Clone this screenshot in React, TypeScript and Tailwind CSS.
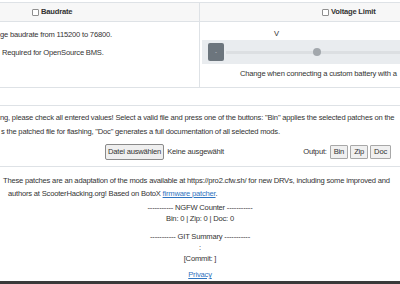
import React from 'react';

const font = { fontFamily: '"Liberation Sans", Arial, sans-serif' };

const Check: React.FC = () => (
  <span className="inline-block w-[7px] h-[7px] border border-[#8f8f8f] rounded-[1px] bg-white mr-[2px]" />
);

const OutBtn: React.FC<{ label: string }> = ({ label }) => (
  <button className="h-[14px] px-[3px] border border-[#a8a8a8] bg-[#f0f0f0] rounded-[1px] leading-[12px]">{label}</button>
);

export default function App() {
  return (
    <div className="w-[400px] h-[284px] overflow-hidden bg-white text-[#333] text-[7.6px] tracking-[-0.2px] flex flex-col" style={font}>
      {/* mod table */}
      <div className="mt-[2px] border-t border-b border-[#dee2e6] grid grid-cols-[199px_201px]">
        <div className="h-[19px] bg-[#f7f7f7] border-b border-[#dee2e6] flex items-center pl-[32px] font-bold">
          <Check />
          <span>Baudrate</span>
        </div>
        <div className="h-[19px] bg-[#f7f7f7] border-b border-l border-[#dee2e6] flex items-center pl-[122px] font-bold">
          <Check />
          <span>Voltage Limit</span>
        </div>
        <div className="h-[65px] pt-[8px] leading-[10px] whitespace-nowrap">
          <div>ge baudrate from 115200 to 76800.</div>
          <div className="mt-[8px] pl-[2px]">Required for OpenSource BMS.</div>
        </div>
        <div className="h-[65px] border-l border-[#dee2e6] pt-[7px] leading-[10px] whitespace-nowrap">
          <div className="pl-[74px]">V</div>
          <div className="ml-[2px] mt-[1px] h-[24px] bg-[#e9ecef] flex items-center pl-[6px]">
            <div className="w-[16px] h-[18px] bg-[#6c757d] rounded-[2px] flex items-center justify-center text-[#c8ccd0] text-[6px]">-</div>
            <div className="flex-1 ml-[2px] h-[3px] bg-[#dcdfe2] relative">
              <span className="absolute left-[87px] top-[-3px] w-[8px] h-[8px] rounded-full bg-[#a3a8ad]" />
            </div>
          </div>
          <div className="mt-[5px] pl-[40px]">Change when connecting a custom battery with a</div>
        </div>
      </div>

      {/* flash section */}
      <div className="mt-[17px] border-t border-b border-[#dee2e6] pt-[5px] pb-[6px] whitespace-nowrap">
        <div className="leading-[14px]">ng, please check all entered values! Select a valid file and press one of the buttons: "Bin" applies the selected patches on the</div>
        <div className="leading-[14px] pl-[1px]">s the patched file for flashing, "Doc" generates a full documentation of all selected mods.</div>
        <div className="mt-[5px] h-[16px] flex items-center">
          <button className="ml-[105px] h-[16px] px-[2px] border border-[#8a8a8a] bg-[#efefef] rounded-[2px]">Datei auswählen</button>
          <span className="ml-[3px]">Keine ausgewählt</span>
          <span className="ml-auto mr-[3px]">Output:</span>
          <div className="flex gap-[2px] mr-[9px]">
            <OutBtn label="Bin" />
            <OutBtn label="Zip" />
            <OutBtn label="Doc" />
          </div>
        </div>
      </div>

      {/* info */}
      <div className="pt-[7px] leading-[13px] whitespace-nowrap">
        <div className="pl-[3px]">These patches are an adaptation of the mods available at https://pro2.cfw.sh/ for new DRVs, including some improved and</div>
        <div className="pl-[8px]">
          authors at ScooterHacking.org! Based on BotoX <a className="text-[#2f74c0] underline">firmware patcher</a>.
        </div>
      </div>
      <div className="flex flex-col items-center leading-[11px] mt-[2px]">
        <div>----------- NGFW Counter -----------</div>
        <div>Bin: 0 | Zip: 0 | Doc: 0</div>
        <div className="mt-[7px]">----------- GIT Summary -----------</div>
        <div>:</div>
        <div>[Commit: ]</div>
        <a className="mt-[5px] text-[#2f74c0] underline">Privacy</a>
      </div>
      <div className="mt-auto h-[3px] bg-[#3a3a3a]" />
    </div>
  );
}
